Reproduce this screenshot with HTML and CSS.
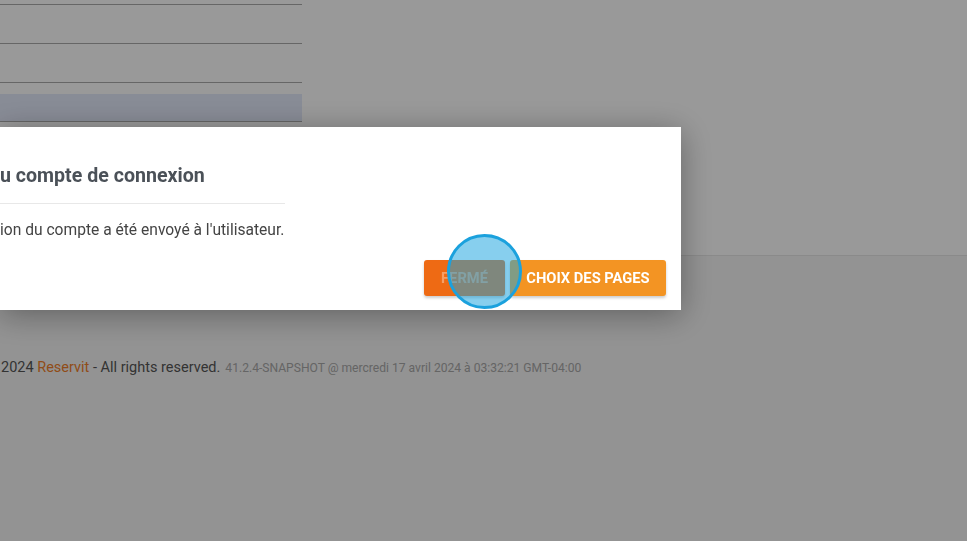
FILE: index.html
```html
<!DOCTYPE html>
<html lang="fr">
<head>
<meta charset="utf-8">
<link rel="stylesheet" href="styles.css">
</head>
<body>
<div class="card">
  <div class="table">
    <div class="row"></div>
    <div class="row"></div>
    <div class="row"></div>
    <div class="row row-selected"><div class="row-highlight"></div></div>
  </div>
</div>
<footer class="footer">
  <span class="copy">2024 <span class="brand">Reservit</span> - All rights reserved.</span>
  <span class="version">41.2.4-SNAPSHOT @ mercredi 17 avril 2024 à 03:32:21 GMT-04:00</span>
</footer>
<div class="backdrop"></div>
<div class="modal">
  <div class="modal-header"><h4 class="modal-title">u compte de connexion</h4></div>
  <div class="modal-body">ion du compte a été envoyé à l'utilisateur.</div>
  <div class="modal-footer">
    <button class="btn btn-close">FERMÉ</button>
    <button class="btn btn-pages">CHOIX DES PAGES</button>
  </div>
</div>
<div class="click-marker"></div>
</body>
</html>
```
FILE: styles.css
```css
html, body {
  margin: 0;
  padding: 0;
  height: 100%;
}
body {
  background: #f5f5f5;
  font-family: Roboto, "Liberation Sans", Arial, sans-serif;
  color: #555;
  overflow: hidden;
}
.card {
  background: #fff;
  height: 255px;
  border-bottom: 1px solid #e6e6e6;
  overflow: hidden;
}
.table {
  width: 302px;
  margin-top: -34px;
}
.row {
  height: 38px;
  border-bottom: 1px solid #aaa;
  display: flex;
  flex-direction: column;
  justify-content: flex-end;
}
.row-highlight {
  height: 27px;
  background: #e3e9fa;
}
.footer {
  padding: 103px 0 0 1px;
  display: flex;
  align-items: baseline;
  gap: 5px;
  white-space: nowrap;
}
.copy {
  font-size: 14.5px;
  color: #565656;
}
.brand {
  color: #f07f2a;
}
.version {
  font-size: 12.1px;
  color: #a8a8a8;
}
.backdrop {
  position: fixed;
  inset: 0;
  background: rgba(0, 0, 0, 0.4);
}
.modal {
  position: fixed;
  top: 127px;
  left: 0;
  width: 681px;
  height: 183px;
  background: #fff;
  box-shadow: 0 5px 30px rgba(0, 0, 0, 0.35);
  display: flex;
  flex-direction: column;
}
.modal-header {
  width: 285px;
  padding-top: 37px;
  padding-bottom: 15px;
  border-bottom: 1px solid #e8e8e8;
}
.modal-title {
  margin: 0;
  font-size: 19.6px;
  line-height: 24px;
  font-weight: 700;
  color: #4b5158;
  white-space: nowrap;
}
.modal-body {
  padding-top: 16px;
  font-size: 15.6px;
  line-height: 20px;
  color: #444;
  white-space: nowrap;
}
.modal-footer {
  margin-top: 20px;
  padding-right: 15px;
  display: flex;
  justify-content: flex-end;
  gap: 5px;
}
.btn {
  height: 36px;
  border: none;
  border-radius: 3px;
  font-family: Roboto, "Liberation Sans", Arial, sans-serif;
  font-size: 14.7px;
  font-weight: 700;
  color: #fff;
  padding: 0;
  box-shadow: 0 2px 3px rgba(0, 0, 0, 0.2);
}
.btn-close {
  width: 81px;
  background: #ee6a14;
  color: rgba(255, 255, 255, 0.35);
}
.btn-pages {
  width: 156px;
  background: #f39423;
}
.click-marker {
  position: fixed;
  left: 447px;
  top: 234px;
  width: 69px;
  height: 69px;
  border: 3px solid #1ba1dd;
  border-radius: 50%;
  background: rgba(24, 163, 222, 0.52);
}
```
